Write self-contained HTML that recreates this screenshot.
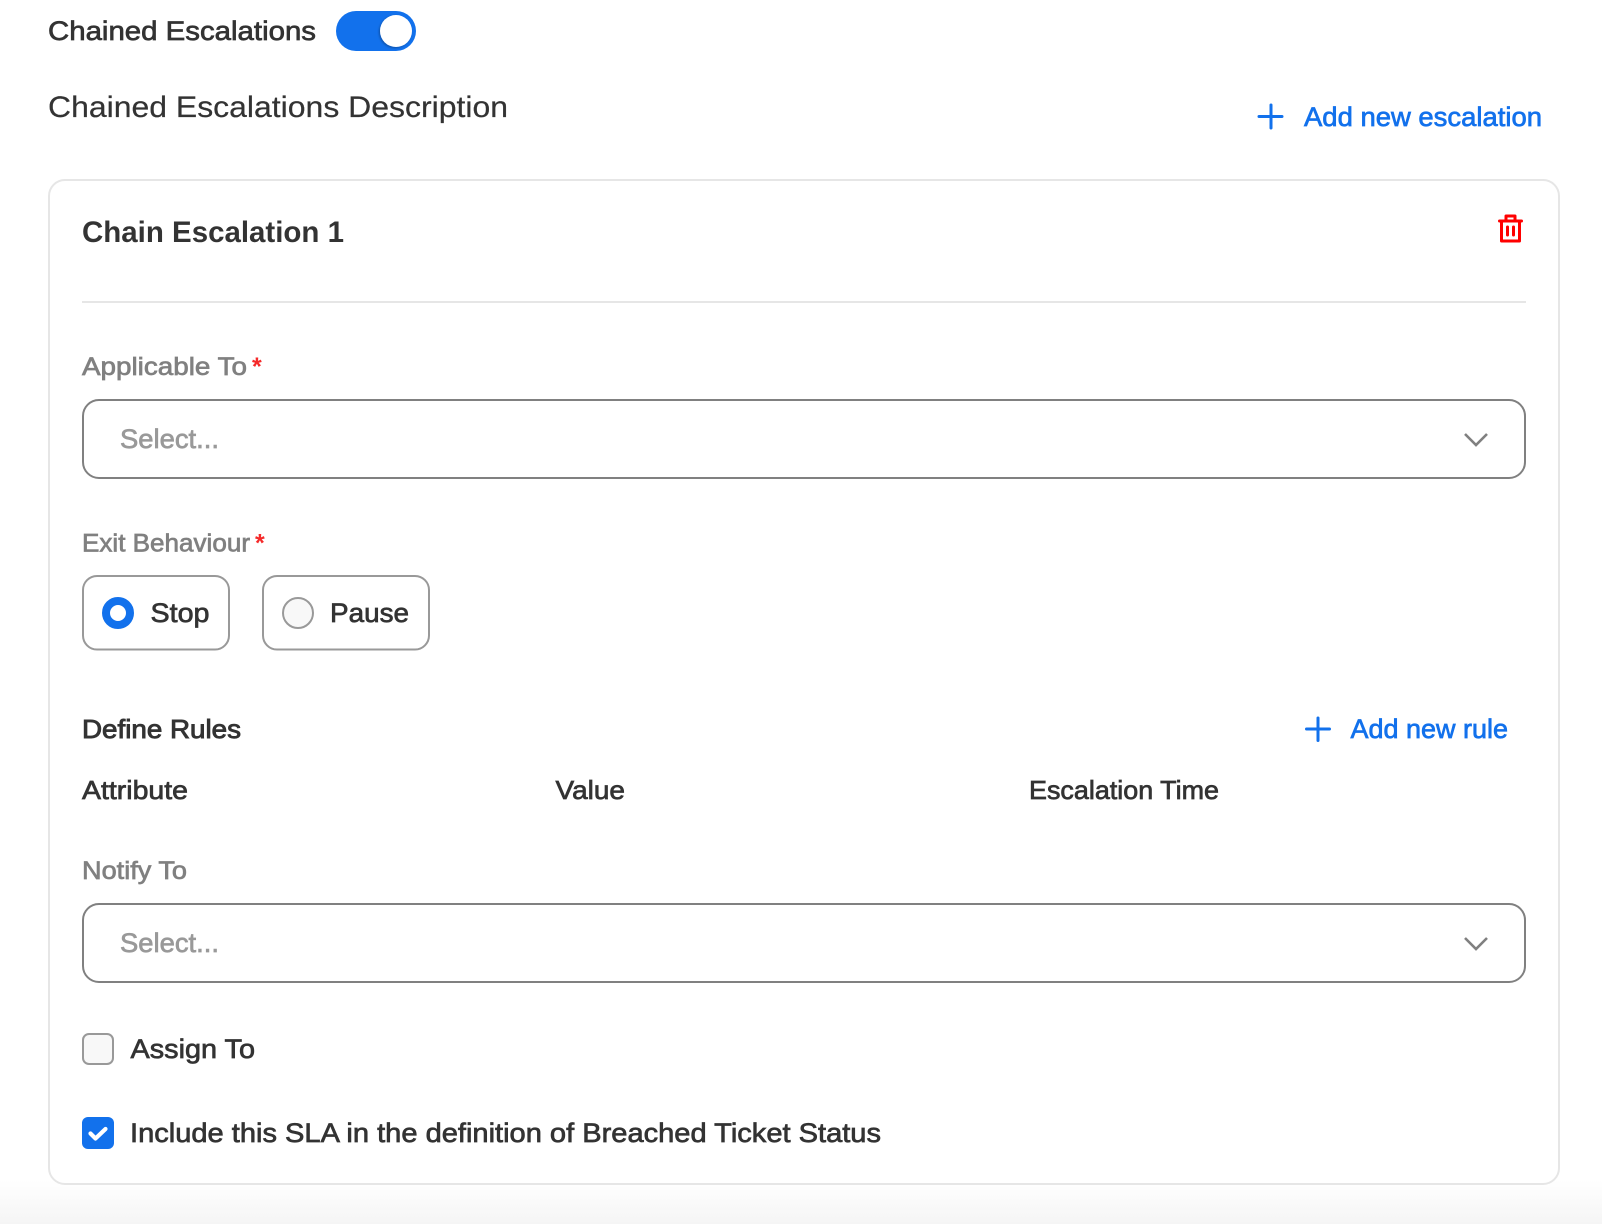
<!DOCTYPE html>
<html lang="en">
<head>
<meta charset="utf-8">
<title>Chained Escalations</title>
<style>
html,body{margin:0;padding:0;background:#fff;width:1602px;height:1224px;overflow:hidden}
svg{display:block}
text{font-family:"Liberation Sans",Arial,sans-serif;fill:#333}
.m{stroke:#333;stroke-width:.7;font-size:27px}
.g{fill:#808080;stroke:#808080;stroke-width:.7;font-size:25px}
.p{fill:#999;stroke:#999;stroke-width:.7;font-size:27px}
.b{fill:#1271ec;stroke:#1271ec;stroke-width:.7;font-size:27px}
.r{fill:#f52a2a;font-size:25px;font-weight:bold}
</style>
</head>
<body>
<svg width="1602" height="1224" viewBox="0 0 1602 1224" xmlns="http://www.w3.org/2000/svg">
<defs>
<linearGradient id="bot" x1="0" y1="0" x2="0" y2="1"><stop offset="0" stop-color="#fff"/><stop offset="1" stop-color="#f5f5f5"/></linearGradient>
<filter id="sh" x="-30%" y="-30%" width="160%" height="160%"><feDropShadow dx="-1" dy="1" stdDeviation="1" flood-color="#000" flood-opacity=".3"/></filter>
</defs>
<rect x="0" y="1180" width="1602" height="44" fill="url(#bot)"/>

<text class="m" x="48" y="40" textLength="268" lengthAdjust="spacingAndGlyphs">Chained Escalations</text>
<rect x="336" y="11" width="80" height="40" rx="20" fill="#1271ec"/>
<circle cx="396" cy="31" r="16" fill="#fff" filter="url(#sh)"/>

<text x="48" y="117" font-size="30" stroke="#333" stroke-width=".2" textLength="460" lengthAdjust="spacingAndGlyphs">Chained Escalations Description</text>

<path d="M1271 105V128M1259 116.500H1282" stroke="#1271ec" stroke-width="3" stroke-linecap="round" fill="none"/>
<text class="b" x="1304" y="126" textLength="238" lengthAdjust="spacingAndGlyphs">Add new escalation</text>

<rect x="49" y="180" width="1510" height="1004" rx="16" fill="#fff" stroke="#e6e6e6" stroke-width="2"/>

<text x="82" y="242" font-size="30" font-weight="bold" textLength="262" lengthAdjust="spacingAndGlyphs">Chain Escalation 1</text>
<g fill="none" stroke="#f00" stroke-width="3" stroke-linejoin="round" stroke-linecap="round">
<path d="M1499.500 221H1521.500"/>
<path d="M1506 220.500V216H1515V220.500"/>
<path d="M1501.500 221V241H1519.500V221"/>
<path d="M1507.500 227V235M1513.500 227V235"/>
</g>
<rect x="82" y="301" width="1444" height="2" fill="#e6e6e6"/>

<text class="g" x="82" y="375" textLength="165" lengthAdjust="spacingAndGlyphs">Applicable To</text>
<text class="r" x="252" y="375">*</text>
<rect x="83" y="400" width="1442" height="78" rx="16" fill="#fff" stroke="#808080" stroke-width="2"/>
<text class="p" x="120" y="448" textLength="99" lengthAdjust="spacingAndGlyphs">Select...</text>
<path d="M1465 434L1476 445L1487 434" fill="none" stroke="#808080" stroke-width="2.600"/>

<text class="g" x="82" y="551.500" textLength="168" lengthAdjust="spacingAndGlyphs">Exit Behaviour</text>
<text class="r" x="255" y="551.500">*</text>
<rect x="83" y="576" width="146" height="73.500" rx="14" fill="#fff" stroke="#999" stroke-width="2"/>
<circle cx="118" cy="613" r="12" fill="#fff" stroke="#1271ec" stroke-width="8"/>
<text class="m" x="150.500" y="622" textLength="59" lengthAdjust="spacingAndGlyphs">Stop</text>
<rect x="263" y="576" width="166" height="73.500" rx="14" fill="#fff" stroke="#999" stroke-width="2"/>
<circle cx="298" cy="613" r="15" fill="#f8f8f8" stroke="#999" stroke-width="2"/>
<text class="m" x="330" y="622" textLength="79" lengthAdjust="spacingAndGlyphs">Pause</text>

<text class="m" x="82" y="738" style="font-size:26px;stroke-width:.9" textLength="159" lengthAdjust="spacingAndGlyphs">Define Rules</text>
<path d="M1318 718V740.500M1306.500 729H1329.500" stroke="#1271ec" stroke-width="3" stroke-linecap="round" fill="none"/>
<text class="b" x="1350.500" y="738" textLength="157.500" lengthAdjust="spacingAndGlyphs">Add new rule</text>

<text class="m" x="82" y="799" style="font-size:26px" textLength="106" lengthAdjust="spacingAndGlyphs">Attribute</text>
<text class="m" x="555.500" y="799" style="font-size:26px" textLength="69.500" lengthAdjust="spacingAndGlyphs">Value</text>
<text class="m" x="1029" y="799" style="font-size:26px" textLength="190" lengthAdjust="spacingAndGlyphs">Escalation Time</text>

<text class="g" x="82" y="879" textLength="105" lengthAdjust="spacingAndGlyphs">Notify To</text>
<rect x="83" y="904" width="1442" height="78" rx="16" fill="#fff" stroke="#808080" stroke-width="2"/>
<text class="p" x="120" y="952" textLength="99" lengthAdjust="spacingAndGlyphs">Select...</text>
<path d="M1465 938L1476 949L1487 938" fill="none" stroke="#808080" stroke-width="2.600"/>

<rect x="83" y="1034" width="30" height="30" rx="6" fill="#f8f8f8" stroke="#999" stroke-width="2"/>
<text class="m" x="130.500" y="1058" textLength="124.500" lengthAdjust="spacingAndGlyphs">Assign To</text>

<rect x="82" y="1117" width="32" height="32" rx="6" fill="#1271ec"/>
<path d="M90.500 1133.500L95.500 1138.500L105.500 1129" fill="none" stroke="#fff" stroke-width="4.200" stroke-linecap="round" stroke-linejoin="round"/>
<text class="m" x="130" y="1142" textLength="751" lengthAdjust="spacingAndGlyphs">Include this SLA in the definition of Breached Ticket Status</text>
</svg>
</body>
</html>
